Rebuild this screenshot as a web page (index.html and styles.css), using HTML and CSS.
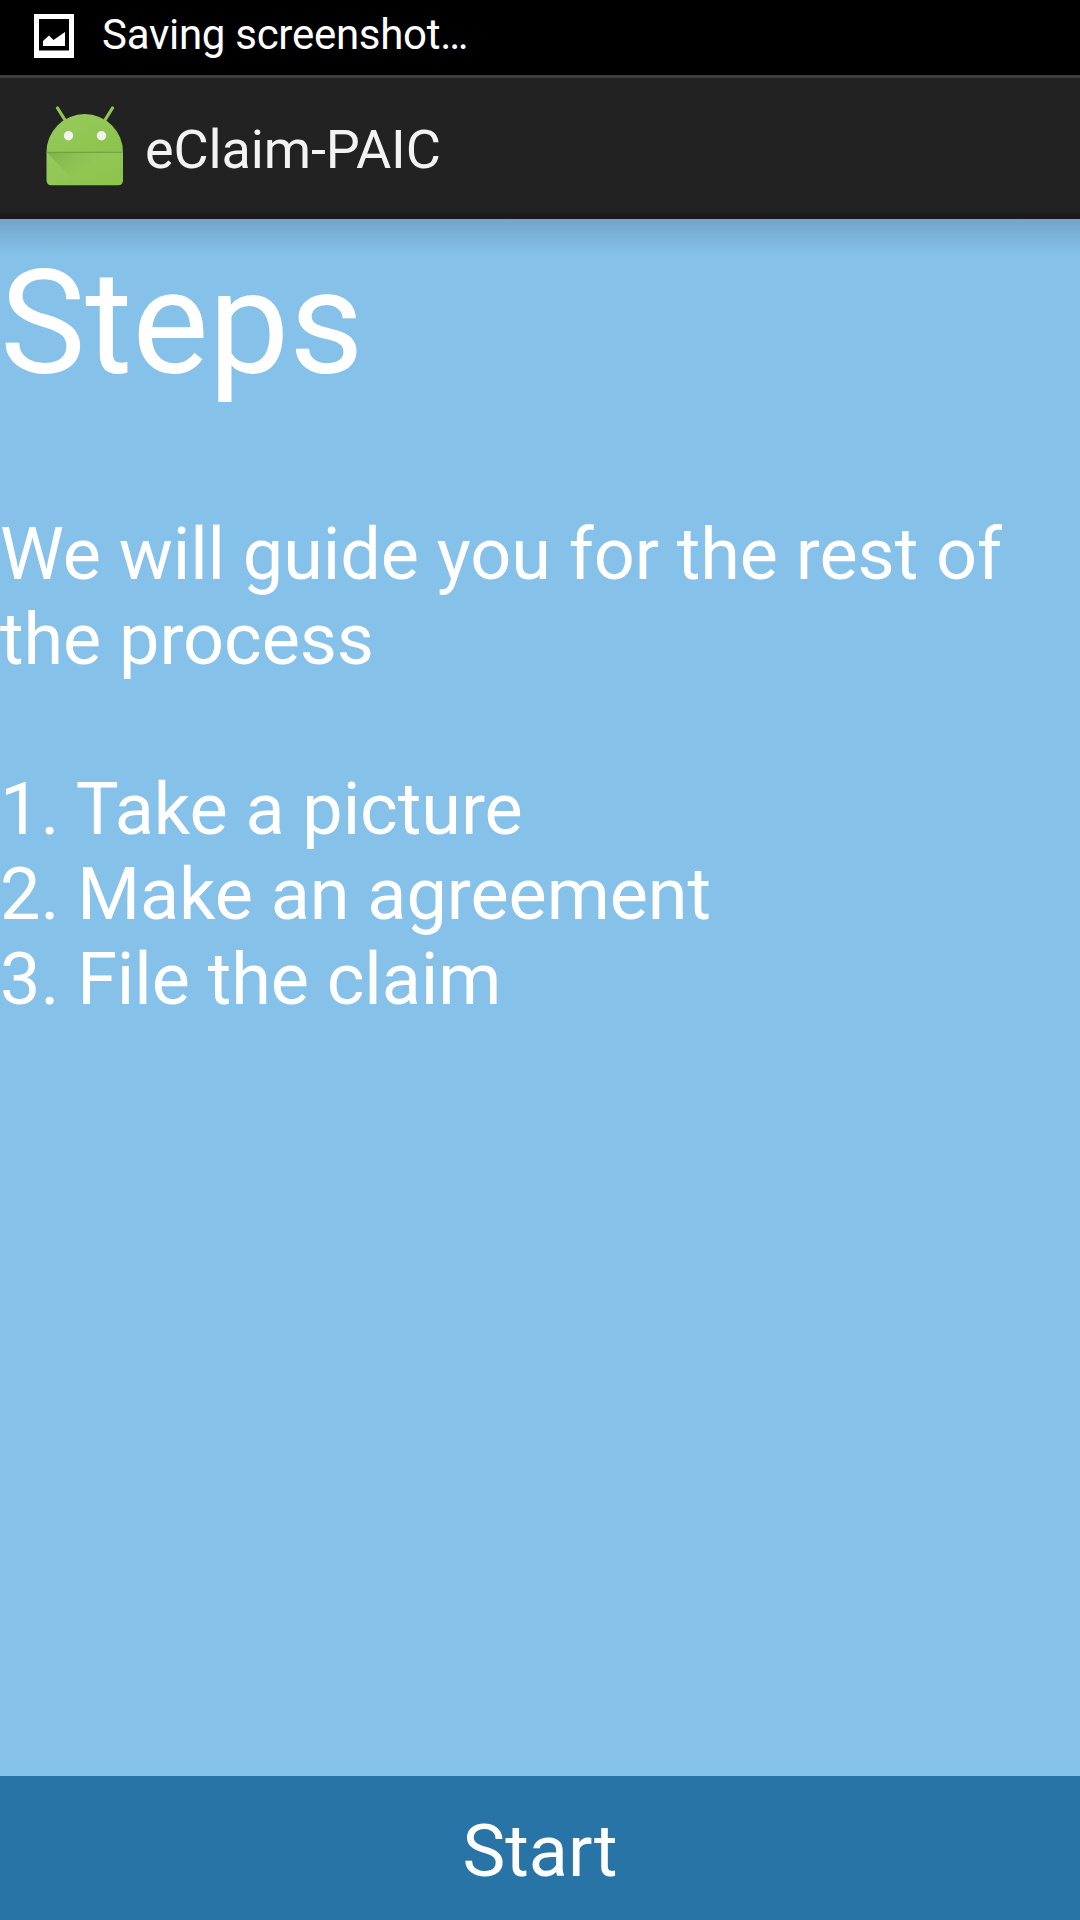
FILE: index.html
```
<!DOCTYPE html>
<html lang="en">
<head><meta charset="utf-8"><title>eClaim-PAIC</title><link rel="stylesheet" href="styles.css"></head>
<body>
<div class="status">
<svg class="pic" viewBox="0 0 40 44"><path fill="#fff" fill-rule="evenodd" d="M0 0h40v44H0zM5 5v31.500h30V5z"/><path fill="#fff" d="M9 32v-5l6-5.500 4.500 4.500L31 18v14z"/></svg>
<span>Saving screenshot…</span></div>
<header class="bar">
<svg class="droid" viewBox="0 0 78 80">
<defs>
<linearGradient id="skin" x1="0" y1="0" x2="1" y2="1"><stop offset="0" stop-color="#97cb5e"/><stop offset="1" stop-color="#8bc34a"/></linearGradient>
<linearGradient id="fold" x1="0" y1="0" x2="1" y2=".5"><stop offset="0" stop-color="#558b2f" stop-opacity=".45"/><stop offset=".65" stop-color="#7cb342" stop-opacity="0"/></linearGradient>
</defs>
<path d="M11.500 2l7.500 12M66.500 2L59 14" stroke="#8fc653" stroke-width="3.200" stroke-linecap="round"/>
<path fill="url(#skin)" d="M.5 46A38.250 38 0 0 1 77 46z"/>
<path fill="url(#skin)" d="M.5 46H77v28.300q0 5-5 5H5.500q-5 0-5-5z"/>
<path fill="url(#fold)" d="M.5 46H77v33H32z"/>
<path d="M.5 46.300H77" stroke="#6f9c40" stroke-width="1"/>
<circle cx="22.500" cy="29.800" r="4.700" fill="#f2f2f2"/><circle cx="55.500" cy="29.800" r="4.700" fill="#f2f2f2"/></svg>
<h1>eClaim-PAIC</h1></header>
<main><h2>Steps</h2><p>We will guide you for the rest of<br>the process</p><p>1. Take a picture<br>2. Make an agreement<br>3. File the claim</p></main>
<button class="start">Start</button>
</body>
</html>
```
FILE: styles.css
```
*{box-sizing:border-box;margin:0;padding:0}
body{width:1080px;height:1920px;display:flex;flex-direction:column;font-family:Roboto,sans-serif;color:#fff;background:#85c1e9;overflow:hidden}
.status{height:75px;background:#000;display:flex;align-items:center;padding:0 0 3px 34px;gap:28px;font-size:42px;letter-spacing:-.28px}
.status span{margin-top:-3px}
.pic{width:40px;height:44px}
.bar{height:144px;background:#222;border-top:3px solid #3d3d3d;border-bottom:6px solid #1b1b1b;display:flex;align-items:center;padding-left:46px;gap:21px}
.droid{width:78px;height:80px}
h1{font-size:54px;font-weight:400;color:#f3f3f3;letter-spacing:-.14px;padding-top:7px}
main{flex:1;background:linear-gradient(#72a5c9,#85c1e9 36px)}
h2{font-size:144px;font-weight:400;line-height:169px;padding-top:20px;margin-bottom:104px;letter-spacing:-.14px}
p{font-size:72px;line-height:85px;margin-bottom:85px;letter-spacing:-.06px}
.start{height:144px;border:0;background:#2874a6;color:#fff;font:72px Roboto,sans-serif;padding-top:7px}
```
